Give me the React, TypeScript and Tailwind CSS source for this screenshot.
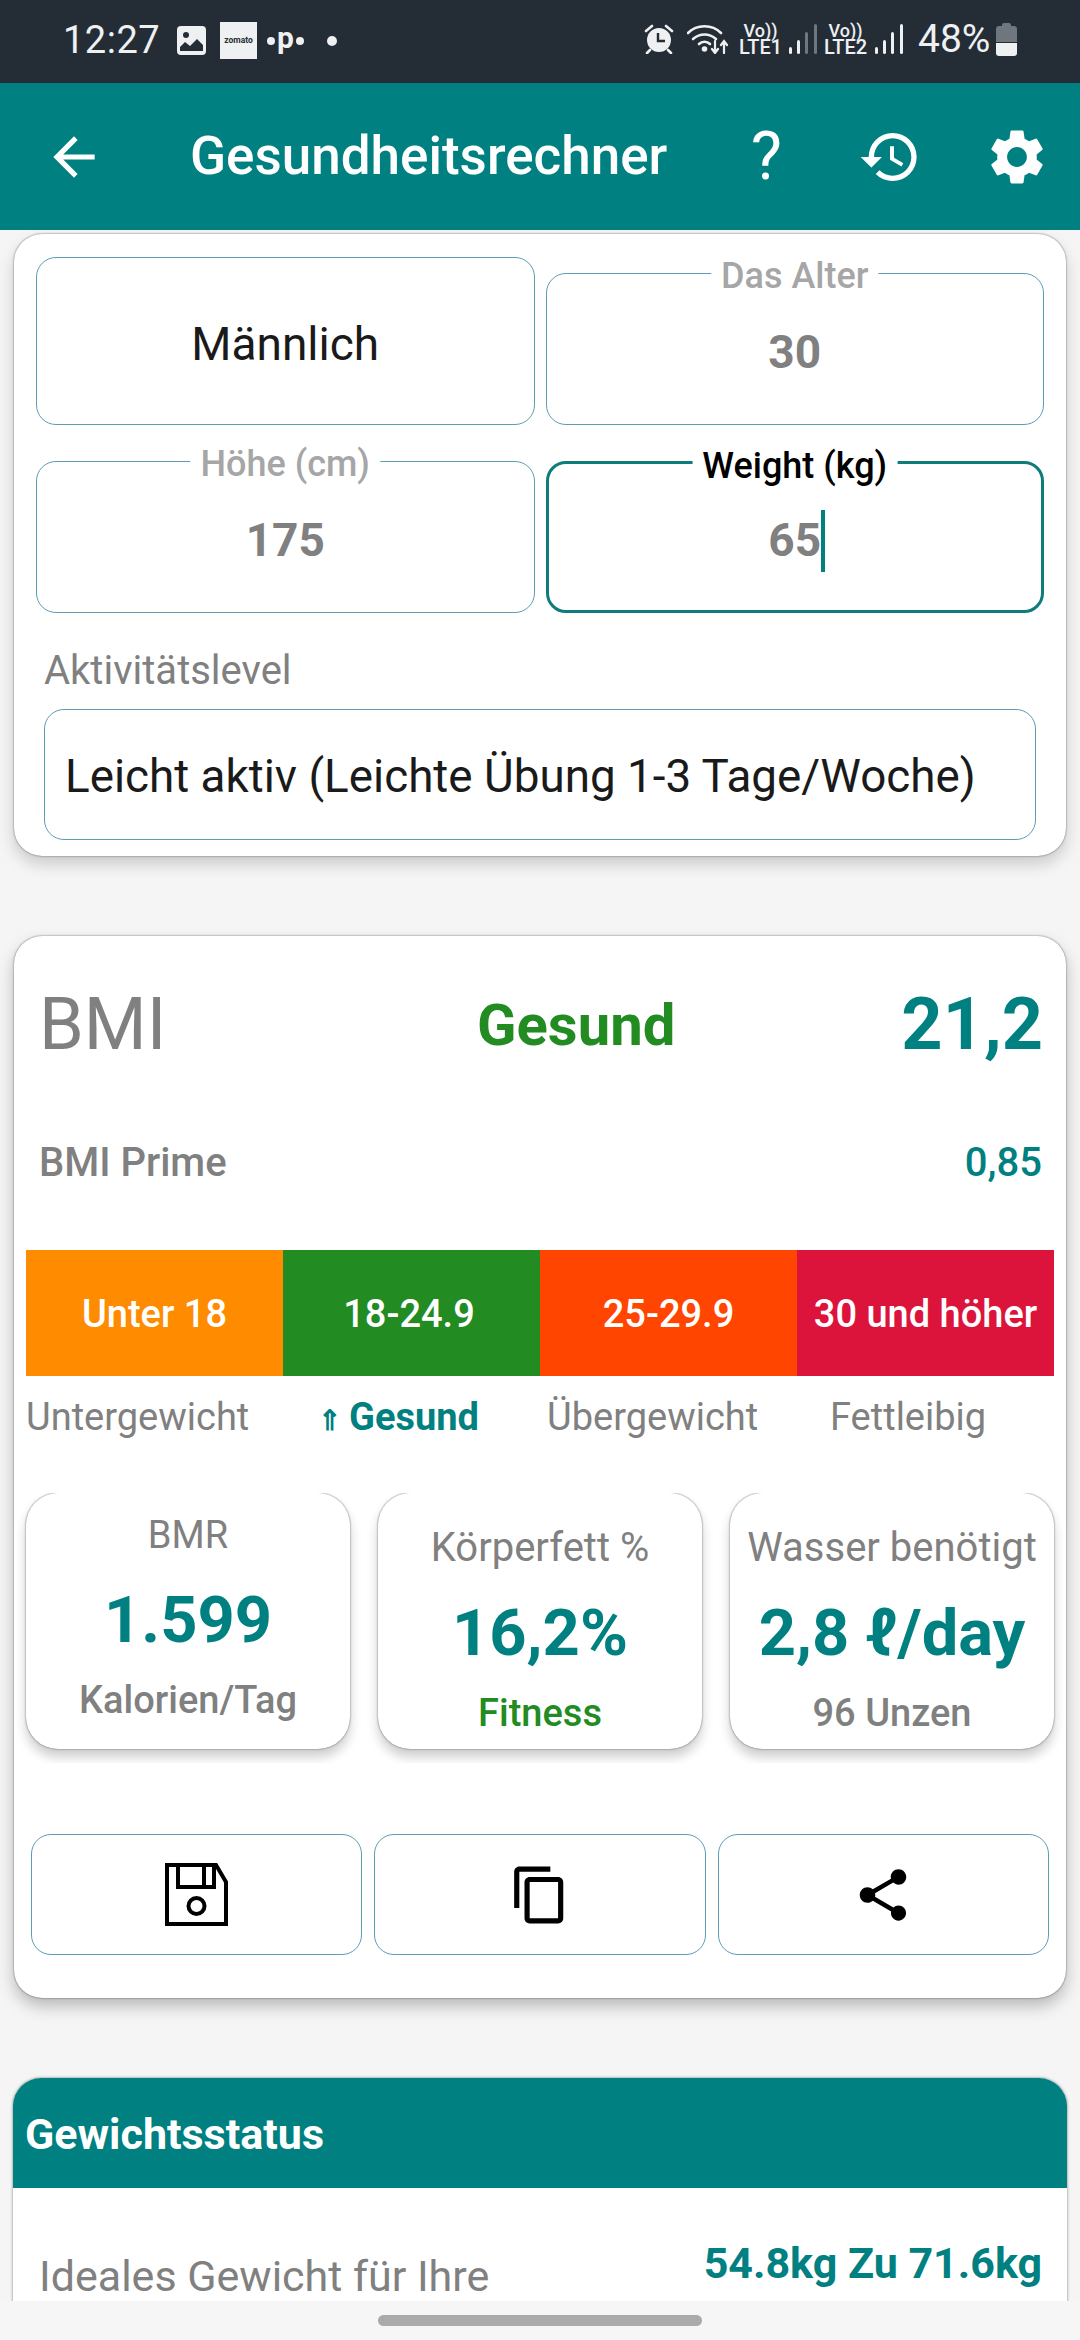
import React from "react";
import { MdArrowBack, MdHistory, MdSettings, MdContentCopy, MdShare } from "react-icons/md";

function ImageIcon() {
  return (
    <svg width="29" height="29" viewBox="0 0 29 29" className="ml-[19px]">
      <rect width="29" height="29" rx="4" fill="#eef0f2" />
      <circle cx="9" cy="9" r="3" fill="#242d36" />
      <path d="M3 25v-4l5-5 5 4 7-7 6 6v6z" fill="#242d36" />
    </svg>
  );
}

function Alarm() {
  return (
    <svg width="30" height="30" viewBox="0 0 30 30">
      <circle cx="15" cy="16" r="12" fill="#eef0f2" />
      <path d="M14 9v8h7" stroke="#242d36" strokeWidth="2.4" fill="none" />
      <path d="M2 7l6-5M28 7l-6-5M6 26l-3 3M24 26l3 3" stroke="#eef0f2" strokeWidth="2.6" strokeLinecap="round" />
    </svg>
  );
}

function Wifi() {
  return (
    <svg width="42" height="30" viewBox="0 0 42 30" fill="none" stroke="#eef0f2" strokeWidth="2.6" strokeLinecap="round">
      <path d="M1 9C10 0 25 0 34 9" />
      <path d="M6 15c7-6 16-6 23 0" />
      <path d="M12 20c3-3 8-3 11 0" />
      <circle cx="17.500" cy="25" r="1.500" fill="#eef0f2" />
      <path d="M28 17v12m-3-4l3 4 3-4M37 29V17m-3 4l3-4 3 4" strokeWidth="2.200" />
    </svg>
  );
}

function Sim({ n }: { n: string }) {
  return (
    <div className="flex flex-col items-center text-[#eef0f2]">
      <span className="text-[18px] leading-[16px] font-medium">Vo))</span>
      <span className="text-[20px] leading-[17px] font-medium">LTE{n}</span>
    </div>
  );
}

function Signal({ dim }: { dim?: boolean }) {
  const last = dim ? "#6f767d" : "#eef0f2";
  return (
    <svg width="28" height="30" viewBox="0 0 28 30" className="ml-[9px]">
      <rect x="0" y="23" width="3" height="7" rx="1.500" fill="#eef0f2" />
      <rect x="8" y="16" width="3" height="14" rx="1.500" fill="#eef0f2" />
      <rect x="16" y="8" width="3" height="22" rx="1.500" fill={last} />
      <rect x="25" y="0" width="3" height="30" rx="1.500" fill={last} />
    </svg>
  );
}

function Battery() {
  return (
    <svg width="21" height="33" viewBox="0 0 21 33" className="ml-[6px]">
      <path d="M6 3V2a2 2 0 0 1 2-2h5a2 2 0 0 1 2 2v1h3a3 3 0 0 1 3 3v13H0V6a3 3 0 0 1 3-3z" fill="#6f767d" />
      <path d="M0 20h21v10a3 3 0 0 1-3 3H3a3 3 0 0 1-3-3z" fill="#eef0f2" />
    </svg>
  );
}

function StatusBar() {
  return (
    <div className="h-[83px] shrink-0 bg-[#242d36] flex items-center pl-[63px] text-[#eef0f2]">
      <span className="text-[38px] leading-none w-[95px] -mt-[4px] tracking-[0.5px]">12:27</span>
      <div className="flex items-center -mt-[2px]">
        <ImageIcon />
        <div className="ml-[14px] w-[37px] h-[37px] bg-[#eef0f2] flex items-center justify-center text-[8.500px] font-bold text-[#242d36]">zomato</div>
        <div className="ml-[10px] w-[37px] flex items-center justify-between">
          <span className="w-[8px] h-[8px] rounded-full bg-[#eef0f2]" />
          <span className="text-[30px] leading-none font-bold -mt-[6px]">p</span>
          <span className="w-[8px] h-[8px] rounded-full bg-[#eef0f2]" />
        </div>
        <span className="ml-[23px] w-[10px] h-[10px] rounded-full bg-[#eef0f2]" />
      </div>
      <div className="ml-auto pr-[63px] flex items-center -mt-[5px]">
        <Alarm />
        <div className="ml-[13px]"><Wifi /></div>
        <div className="ml-[12px] w-[39px]"><Sim n="1" /></div>
        <Signal dim />
        <div className="ml-[8px] w-[41px]"><Sim n="2" /></div>
        <Signal />
        <span className="ml-[15px] text-[39px] leading-none w-[72px] whitespace-nowrap">48%</span>
        <Battery />
      </div>
    </div>
  );
}

function AppBar() {
  return (
    <div className="h-[147px] shrink-0 bg-[#008080] flex items-center text-white">
      <MdArrowBack className="ml-[43px]" size={62} />
      <h1 className="ml-[85px] text-[53px] leading-none font-medium flex-1 whitespace-nowrap">Gesundheitsrechner</h1>
      <span className="text-[66px] leading-none mr-[76px]">?</span>
      <MdHistory className="mr-[62px]" size={64} />
      <MdSettings className="mr-[30px]" size={66} />
    </div>
  );
}

function Field({ label, value, focused }: { label: string; value: string; focused?: boolean }) {
  return (
    <div className={`relative h-[152px] rounded-[20px] flex items-center justify-center bg-white ${focused ? "border-[3px] border-[#0f7c7c]" : "border border-[#5b9db5]"}`}>
      <span className={`absolute -top-[19px] left-1/2 -translate-x-1/2 bg-white px-[10px] text-[36px] leading-[42px] font-medium whitespace-nowrap ${focused ? "text-black" : "text-[#a6a6a6]"}`}>
        {label}
      </span>
      <span className="relative top-[3px] text-[46px] leading-none font-bold text-[#808080]">
        {value}
        {focused && <span className="absolute -right-[4px] -top-[7px] w-[4px] h-[62px] bg-[#008080]" />}
      </span>
    </div>
  );
}

function FormCard() {
  return (
    <section className="mx-[14px] h-[622px] bg-white rounded-[28px] shadow-[0_0_2px_rgba(0,0,0,0.6),0_8px_16px_rgba(0,0,0,0.18)] px-[22px] pt-[23px]">
      <div className="grid grid-cols-2 gap-x-[11px] items-end">
        <div className="h-[168px] rounded-[20px] border border-[#5b9db5] flex items-center justify-center pt-[5px] text-[46px] leading-none text-[#1a1a1a]">Männlich</div>
        <Field label="Das Alter" value="30" />
      </div>
      <div className="grid grid-cols-2 gap-x-[11px] mt-[36px]">
        <Field label="Höhe (cm)" value="175" />
        <Field label="Weight (kg)" value="65" focused />
      </div>
      <div className="ml-[8px] mt-[36px] text-[40px] leading-[44px] text-[#808080]">Aktivitätslevel</div>
      <div className="mx-[8px] mt-[16px] h-[131px] rounded-[20px] border border-[#5b9db5] flex items-center pl-[20px] pt-[4px] text-[45.8px] leading-none text-[#1a1a1a] whitespace-nowrap">
        Leicht aktiv (Leichte Übung 1-3 Tage/Woche)
      </div>
    </section>
  );
}

const segments = [
  { text: "Unter 18", bg: "bg-[#ff8c00]" },
  { text: "18-24.9", bg: "bg-[#228b22] pr-[5px]" },
  { text: "25-29.9", bg: "bg-[#ff4500]" },
  { text: "30 und höher", bg: "bg-[#dc143c]" },
];

function Stat({ title, value, note, noteClass, topClass, titleClass }: { title: string; value: string; note: string; noteClass: string; topClass: string; titleClass: string }) {
  return (
    <div className={`w-[324px] h-[256px] bg-white rounded-[32px] shadow-[0_0_2px_rgba(0,0,0,0.6),0_8px_12px_rgba(0,0,0,0.2)] flex flex-col items-center ${topClass}`}>
      <div className={`leading-[44px] text-[#808080] whitespace-nowrap ${titleClass}`}>{title}</div>
      <div className="mt-[27px] text-[65px] leading-[72px] font-bold text-[#008080] whitespace-nowrap">{value}</div>
      <div className={`mt-[22px] text-[38px] leading-[44px] font-medium whitespace-nowrap ${noteClass}`}>{note}</div>
    </div>
  );
}

function Floppy() {
  return (
    <svg width="63" height="63" viewBox="0 0 63 63" fill="none" stroke="#000" strokeWidth="4">
      <path d="M2 2h49l10 17v42H2z" />
      <path d="M13 2v22h36V2M39 2v22" />
      <circle cx="31.500" cy="43" r="8" />
    </svg>
  );
}

function BmiCard() {
  return (
    <section className="mx-[14px] mt-[80px] h-[1062px] bg-white rounded-[28px] shadow-[0_0_2px_rgba(0,0,0,0.6),0_8px_16px_rgba(0,0,0,0.25)] pt-[39px]">
      <div className="relative h-[100px] flex items-center justify-between pl-[25px] pr-[23px]">
        <span className="text-[72px] leading-none text-[#808080]">BMI</span>
        <span className="absolute left-[463px] text-[58px] leading-none font-bold text-[#228b22]">Gesund</span>
        <span className="text-[72px] leading-none font-bold text-[#008080]">21,2</span>
      </div>
      <div className="mt-[58px] h-[60px] flex items-center justify-between pl-[25px] pr-[24px] text-[40px] leading-none font-medium">
        <span className="text-[#808080]">BMI Prime</span>
        <span className="text-[#008080]">0,85</span>
      </div>
      <div className="mt-[57px] mx-[12px] h-[126px] grid grid-cols-4">
        {segments.map((s) => (
          <div key={s.text} className={`${s.bg} flex items-center justify-center pt-[2px] text-white text-[38px] leading-none font-medium whitespace-nowrap`}>
            {s.text}
          </div>
        ))}
      </div>
      <div className="mx-[12px] h-[80px] pt-[2px] grid grid-cols-4 items-center text-[38px] leading-none text-[#808080] whitespace-nowrap">
        <span>Untergewicht</span>
        <span className="pl-[35px] text-[#008080] font-bold"><span className="text-[28px] mr-[8px]">⇑</span>Gesund</span>
        <span className="pl-[7px]">Übergewicht</span>
        <span className="pl-[33px]">Fettleibig</span>
      </div>
      <div className="mt-[37px] px-[12px] pb-[14px] overflow-hidden flex justify-between">
        <Stat title="BMR" value="1.599" note="Kalorien/Tag" noteClass="text-[#808080]" topClass="pt-[20px]" titleClass="text-[38px]" />
        <Stat title="Körperfett %" value="16,2%" note="Fitness" noteClass="text-[#228b22]" topClass="pt-[33px]" titleClass="text-[40px]" />
        <Stat title="Wasser benötigt" value="2,8 ℓ/day" note="96 Unzen" noteClass="text-[#808080]" topClass="pt-[33px]" titleClass="text-[40px]" />
      </div>
      <div className="mt-[71px] mx-[17px] grid grid-cols-3 gap-x-[12px]">
        <div className="h-[121px] rounded-[20px] border border-[#5b9db5] flex items-center justify-center"><Floppy /></div>
        <div className="h-[121px] rounded-[20px] border border-[#5b9db5] flex items-center justify-center"><MdContentCopy size={62} color="#000" /></div>
        <div className="h-[121px] rounded-[20px] border border-[#5b9db5] flex items-center justify-center"><MdShare size={62} color="#000" /></div>
      </div>
    </section>
  );
}

function WeightCard() {
  return (
    <section className="mx-[13px] mt-[80px] bg-white rounded-t-[28px] shadow-[0_0_3px_rgba(0,0,0,0.5)]">
      <div className="h-[110px] bg-[#008080] rounded-t-[28px] flex items-center pl-[12px] pt-[2px] text-[43px] leading-none font-bold text-white">Gewichtsstatus</div>
      <div className="flex justify-between pl-[26px] pr-[25px] pb-[20px]">
        <span className="pt-[64px] text-[43px] leading-[48px] text-[#808080]">Ideales Gewicht für Ihre</span>
        <span className="pt-[51px] text-[43px] leading-[48px] font-bold text-[#008080]">54.8kg Zu 71.6kg</span>
      </div>
    </section>
  );
}

export default function App() {
  return (
    <div className="w-[1080px] h-[2340px] flex flex-col bg-[#f5f5f5] overflow-hidden font-[Roboto,sans-serif]">
      <StatusBar />
      <AppBar />
      <main className="flex-1 min-h-0 overflow-hidden pt-[4px]">
        <FormCard />
        <BmiCard />
        <WeightCard />
      </main>
      <div className="h-[39px] shrink-0 bg-[#f6f6f6] flex justify-center pt-[14px] relative">
        <div className="w-[324px] h-[11px] rounded-full bg-[#aaaaaa]" />
      </div>
    </div>
  );
}
